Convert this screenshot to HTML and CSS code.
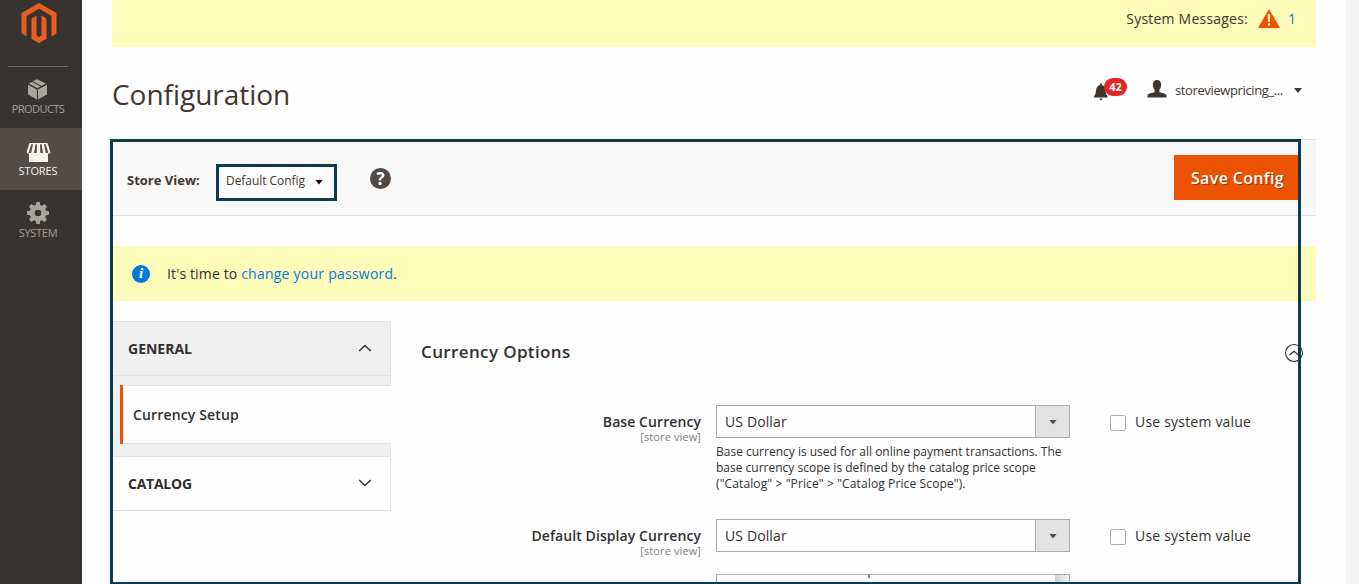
FILE: index.html
```html
<!DOCTYPE html>
<html lang="en">
<head>
<meta charset="utf-8">
<title>Configuration</title>
<link rel="stylesheet" href="styles.css">
</head>
<body>
<div class="app">
  <nav class="sidebar">
    <div class="brand">
      <svg width="36" height="42" viewBox="0 0 36 42" fill="#eb5c21"><path d="M18 0L35.5 10V30.5L30.5 33.5V13L18 5.8L5.500 13V33.500L.5 30.500V10Z"/><path d="M10.500 15.500L15.500 12.700V32.500L18 34L20.500 32.500V12.700L25.500 15.500V35.800L18 40.200L10.500 35.800Z"/></svg>
    </div>
    <a class="nav-item">
      <svg width="20" height="21" viewBox="0 0 20 21" fill="#a9a59d"><path d="M0 5.800L8.900 10.500V20.500L0 15.500ZM19 5.800V15.500L10 20.500V10.500ZM.8 4.500L4 2.800L12.500 7.600L9.500 9.200ZM5 2.300L8.900 .2L18 4.600L13.600 7Z"/></svg>
      <span class="nav-label products">PRODUCTS</span>
    </a>
    <a class="nav-item active">
      <svg width="25" height="20" viewBox="0 0 25 20"><path fill="#f7f3eb" d="M3.500 0H21.500L24.500 9.500Q22.500 11.500 22 10.200V19H3V10.200Q2 11.300 .5 9.500Z"/><g fill="#524d49"><path d="M5.300 1.200H7L5.200 10H2.600Z"/><path d="M9.500 1.200H11L10.700 10H8Z"/><path d="M14 1.200H15.500L17 10H14.300Z"/><path d="M18 1.200H19.700L22.400 10H19.800Z"/></g></svg>
      <span class="nav-label stores">STORES</span>
    </a>
    <a class="nav-item">
      <svg width="22" height="22" viewBox="0 0 22 22"><path fill="#a9a59d" fill-rule="evenodd" d="M9.300 0H12.700L13.200 3L15 3.800L17.500 2L20 4.500L18.200 7L19 8.800L22 9.300V12.700L19 13.200L18.200 15L20 17.500L17.500 20L15 18.200L13.200 19L12.700 22H9.300L8.800 19L7 18.200L4.500 20L2 17.500L3.800 15L3 13.200L0 12.700V9.300L3 8.800L3.800 7L2 4.500L4.500 2L7 3.800L8.800 3ZM11 7.700A3.300 3.300 0 1 0 11 14.300A3.300 3.300 0 1 0 11 7.700Z"/></svg>
      <span class="nav-label system">SYSTEM</span>
    </a>
  </nav>

  <main class="page">
    <div class="system-messages">
      <span class="sys-text">System Messages:</span>
      <svg width="22" height="19" viewBox="0 0 22 19"><path fill="#eb5202" d="M11 0L22 19H0Z"/><path fill="#fffbbb" d="M9.800 5H12.200L11.800 13H10.200ZM10 14.300H12V16.500H10Z"/></svg>
      <a class="sys-count">1</a>
    </div>

    <header class="page-header">
      <h1 class="title">Configuration</h1>
      <div class="account">
        <div class="bell">
          <svg width="16" height="18" viewBox="0 0 16 18" fill="#41362f"><path d="M7 .5H9V2Q12.500 3 12.500 7.500Q12.600 11.500 15 14.500H.500Q3 11.500 3 7.500Q3.300 3 7 2ZM5.800 15.500H9.800L8 17.500Z"/></svg>
          <span class="badge">42</span>
        </div>
        <svg class="user" width="20" height="18" viewBox="0 0 20 18" fill="#41362f"><path d="M10 0C13 0 14.300 2 14.200 5C14.200 7.500 13.200 8.500 12.400 9.800V12C14.500 13.300 19.500 13.200 19.500 15.500V17.500H.500V15.500C.500 13.200 5.500 13.300 7.600 12V9.800C6.800 8.500 5.800 7.500 5.800 5C5.700 2 7 0 10 0Z"/></svg>
        <span class="user-name">storeviewpricing_...</span>
        <i class="caret user-caret"></i>
      </div>
    </header>

    <div class="toolbar">
      <span class="scope-label">Store View:</span>
      <button class="scope"><span>Default Config</span><i class="caret dark"></i></button>
      <span class="help">?</span>
      <button class="save">Save Config</button>
    </div>

    <div class="notice">
      <span class="info">i</span>
      <p class="notice-text">It's time to <a>change your password</a>.</p>
    </div>

    <div class="columns">
      <aside class="tabs">
        <div class="tab open"><span>GENERAL</span><svg width="14" height="8" viewBox="0 0 14 8"><path d="M1.200 7L7 1.500L12.800 7"/></svg></div>
        <div class="subtabs"><div class="subtab">Currency Setup</div></div>
        <div class="tab"><span class="catalog">CATALOG</span><svg width="14" height="8" viewBox="0 0 14 8"><path d="M1.200 1L7 6.500L12.800 1"/></svg></div>
      </aside>
      <section class="options">
        <div class="section-head">
          <h2>Currency Options</h2>
          <svg width="20" height="20" viewBox="0 0 20 20"><circle cx="10" cy="10" r="8.500"/><path d="M5.500 12L10 8.300L14.500 12"/></svg>
        </div>
        <div class="field">
          <div class="field-label"><b class="base">Base Currency</b><small>[store view]</small></div>
          <div class="control">
            <div class="select"><span>US Dollar</span><em><i class="caret small"></i></em></div>
            <p class="hint">Base currency is used for all online payment transactions. The<br>base currency scope is defined by the catalog price scope<br><span class="path">("Catalog" &gt; "Price" &gt; "Catalog Price Scope").</span></p>
          </div>
          <label class="system-value"><span class="box"></span>Use system value</label>
        </div>
        <div class="field">
          <div class="field-label"><b class="display">Default Display Currency</b><small>[store view]</small></div>
          <div class="control">
            <div class="select"><span>US Dollar</span><em><i class="caret small"></i></em></div>
          </div>
          <label class="system-value"><span class="box"></span>Use system value</label>
        </div>
        <div class="multiselect"><i class="descender"></i><i class="track"></i></div>
      </section>
    </div>
  </main>
  <div class="frame"></div>
</div>
</body>
</html>
```

FILE: styles.css
```css
* { box-sizing: border-box; }
body {
  margin: 0;
  background: #f3f3f3;
  color: #303030;
  font: 14px/20px "Open Sans", "Noto Sans", sans-serif;
}
svg { display: block; flex: none; }
h1, h2, p { margin: 0; }
button { font: inherit; border: 0; padding: 0; }
.app {
  position: relative;
  display: flex;
  width: 1346px;
  height: 584px;
  overflow: hidden;
  background: #fefefe;
}

/* Sidebar */
.sidebar { width: 82px; flex: none; background: #373330; }
.brand {
  width: 60px;
  height: 67px;
  margin: 0 0 0 8px;
  padding: 3px 0 0 12.5px;
  border-bottom: 1px solid #736963;
}
.nav-item {
  display: flex;
  flex-direction: column;
  align-items: center;
  height: 62px;
  padding: 12px 6px 0 0;
  color: #a79d95;
}
.brand + .nav-item { height: 61px; }
.nav-item.active { background: #524d49; color: #f7f3eb; padding-top: 15px; }
.nav-label { font-size: 11px; line-height: 14px; margin-top: auto; margin-bottom: 12px; }
.products { letter-spacing: -.55px; }
.stores { letter-spacing: -.1px; }
.system { letter-spacing: -.3px; }

/* Page */
.page { width: 1204px; margin-left: 30px; flex: none; }
.system-messages {
  display: flex;
  justify-content: flex-end;
  height: 47px;
  padding: 9px 20px 0 0;
  background: #fffbbb;
  color: #41362f;
}
.sys-text { letter-spacing: .22px; }
.system-messages svg { margin: 0 8px 0 10px; }
.sys-count, .notice a { color: #007bdb; }
.page-header { display: flex; justify-content: space-between; height: 92px; }
.title { padding-top: 27px; font-size: 28px; line-height: 40px; font-weight: 400; letter-spacing: -.03px; color: #41362f; }
.account { display: flex; align-items: flex-start; padding: 33px 14px 0 0; color: #41362f; }
.bell { display: flex; width: 34px; margin-right: 20px; margin-left: -1px; }
.bell svg { margin: 3px -5px 0 0; }
.badge {
  width: 23px;
  height: 18px;
  margin-top: -2px;
  flex: none;
  border-radius: 9px;
  background: #e22626;
  color: #fff;
  font-size: 11px;
  font-weight: 700;
  line-height: 18px;
  text-align: center;
}
.user { margin-right: 8px; }
.user-name { font-size: 13px; letter-spacing: -.38px; width: 109px; white-space: nowrap; }
.caret {
  flex: none;
  width: 8px;
  height: 5px;
  background: #41362f;
  clip-path: polygon(0 0, 100% 0, 50% 100%);
}
.user-caret { margin: 8px 0 0 10px; }
.dark { background: #000; }
.small { background: #514943; }

.toolbar {
  display: flex;
  height: 77px;
  padding-left: 15px;
  background: #f8f8f8;
  border: solid #e3e3e3;
  border-width: 1px 0;
}
.scope-label { width: 89px; margin-top: 30px; font-size: 13px; font-weight: 700; color: #41362f; }
.scope {
  display: flex;
  align-items: center;
  width: 121px;
  height: 37px;
  margin-top: 24px;
  padding: 0 11px 4px 7px;
  justify-content: space-between;
  border: 3px solid #0d3c4d;
  background: #fefefe;
  color: #41362f;
  font-size: 12px;
}
.scope span { letter-spacing: -.05px; }
.scope .caret { margin-top: 3px; }
.help {
  width: 21px;
  height: 21px;
  margin: 28px 0 0 33px;
  border-radius: 50%;
  background: #514943;
  color: #fff;
  font-size: 17px;
  font-weight: 700;
  line-height: 21px;
  text-align: center;
}
.save {
  width: 127px;
  height: 45px;
  margin: 15px 15px 0 auto;
  background: #eb5202;
  color: #fff;
  font-size: 16px;
  font-weight: 600;
  letter-spacing: .35px;
  text-shadow: 1px 1px 0 rgba(0, 0, 0, .3);
}

.notice {
  display: flex;
  align-items: center;
  height: 55px;
  margin: 30px 0 20px;
  padding-left: 20px;
  background: #fffbbb;
}
.notice-text { letter-spacing: .14px; }
.notice-text a { letter-spacing: .24px; }
.info {
  width: 18px;
  height: 18px;
  margin-right: 17px;
  border-radius: 50%;
  background: #007bdb;
  color: #fff;
  font: italic 700 15px/17px "Liberation Serif", serif;
  text-align: center;
}

/* Configuration groups */
.columns { display: flex; align-items: flex-start; }
.tabs { width: 279px; flex: none; border: solid #e3e3e3; border-width: 1px 0; }
.tab {
  display: flex;
  align-items: center;
  justify-content: space-between;
  height: 53px;
  padding: 1px 18px 0 16px;
  border-right: 1px solid #e3e3e3;
  font-weight: 700;
}
.tab svg { fill: none; stroke: #303030; stroke-width: 1.5; margin-bottom: 2px; }
.catalog { letter-spacing: -.25px; }
.tab.open { background: #f0f0f0; }
.subtabs {
  height: 82px;
  padding: 9px 0 12px 8px;
  background: linear-gradient(#e3e3e3, #e3e3e3) right / 1px 100% no-repeat #f0f0f0;
  border: solid #e3e3e3;
  border-width: 1px 0;
}
.subtab {
  height: 59px;
  background:
    linear-gradient(#eb5202, #eb5202) left / 3px 100% no-repeat,
    linear-gradient(#e3e3e3, #e3e3e3) top / 100% 1px no-repeat,
    linear-gradient(#e3e3e3, #e3e3e3) bottom / 100% 1px no-repeat,
    #fefefe;
  padding-left: 13px;
  line-height: 59px;
  font-weight: 600;
  letter-spacing: .15px;
}
.options { width: 895px; margin-left: 30px; }
.section-head { display: flex; justify-content: space-between; height: 84px; padding-top: 19px; }
.section-head h2 { font-size: 17px; line-height: 24px; font-weight: 600; letter-spacing: .37px; }
.section-head svg { margin: 3px 12px 0 0; fill: none; stroke: #303030; stroke-width: 1.1; }
.field { display: flex; height: 114px; }
.field + .field { height: 55px; }
.field-label { display: flex; flex-direction: column; width: 280px; padding-top: 7px; text-align: right; }
.field-label b { font-weight: 600; letter-spacing: .08px; }
.field-label small { margin-top: -1px; font-size: 11px; line-height: 12px; letter-spacing: .1px; color: #808080; }
.control { width: 354px; margin-left: 15px; }
.select { display: flex; height: 33px; border: 1px solid #adadad; }
.select span { flex: 1; padding: 6px 8px; letter-spacing: .12px; }
.select em {
  display: flex;
  align-items: center;
  justify-content: center;
  width: 34px;
  border-left: 1px solid #adadad;
  background: #e3e3e3;
}
.select .caret { width: 8px; height: 5px; margin: 1px 0 0 1px; }
.hint { margin-top: 6px; font-size: 12px; line-height: 16px; white-space: nowrap; }
.path { letter-spacing: .12px; }
.system-value { display: flex; padding-top: 7px; margin-left: 40px; white-space: nowrap; letter-spacing: .2px; }
.box { width: 16px; height: 16px; margin: 3px 9px 0 0; border: 1px solid #adadad; border-radius: 2px; }
.multiselect {
  display: flex;
  width: 354px;
  height: 60px;
  margin-left: 295px;
  border: 1px solid #adadad;
}
.descender { width: 2px; height: 3px; margin-left: 151px; background: #8c7773; }
.track { width: 14px; margin-left: auto; background: linear-gradient(90deg, #cecece, #f3f3f3); }

/* Highlight outline drawn over the configuration area */
.frame {
  position: absolute;
  left: 110px;
  top: 139px;
  width: 1191px;
  height: 445px;
  border: 3px solid #0d3c4d;
  border-bottom-width: 2px;
}
```
